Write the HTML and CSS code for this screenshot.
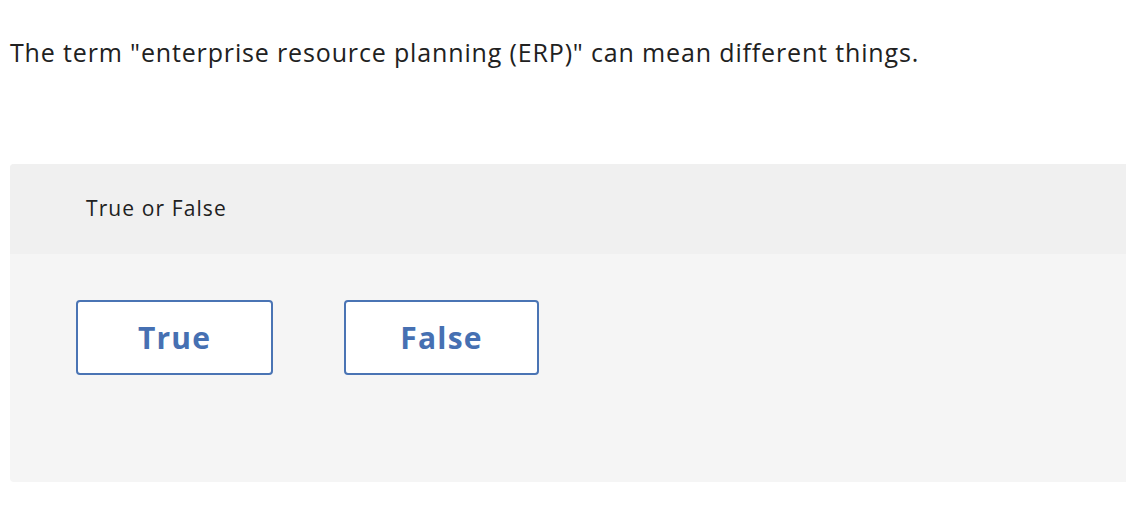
FILE: index.html
```html
<!DOCTYPE html>
<html>
<head>
<meta charset="utf-8">
<link rel="stylesheet" href="styles.css">
</head>
<body>
<div class="page">
  <p class="question">The term "enterprise resource planning (ERP)" can mean different things.</p>
  <div class="card">
    <div class="card-head">True or False</div>
    <div class="card-body">
      <button class="choice">True</button>
      <button class="choice">False</button>
    </div>
  </div>
</div>
</body>
</html>
```
FILE: styles.css
```css
html, body {
  margin: 0;
  padding: 0;
  background: #ffffff;
}
.page {
  padding: 36px 0 0 10px;
  font-family: "Open Sans", Lato, sans-serif;
  color: #212121;
}
.question {
  margin: 0;
  font-size: 25px;
  line-height: 32px;
  letter-spacing: 0.85px;
}
.card {
  margin-top: 96px;
  background: #f5f5f5;
  border-radius: 4px 0 0 4px;
  overflow: hidden;
  height: 318px;
}
.card-head {
  background: #f0f0f0;
  height: 90px;
  box-sizing: border-box;
  padding: 30px 0 0 76px;
  font-size: 21px;
  line-height: 28px;
  letter-spacing: 1.1px;
}
.card-body {
  display: flex;
  gap: 71px;
  padding: 46px 0 0 66px;
}
.choice {
  width: 197px;
  height: 75px;
  background: #ffffff;
  border: 2px solid #4a74b4;
  border-radius: 4px;
  color: #4670b2;
  font-family: "Open Sans", Lato, sans-serif;
  font-weight: 700;
  font-size: 30px;
  letter-spacing: 1.2px;
  padding: 0;
  cursor: pointer;
}
.choice + .choice {
  width: 195px;
}
```
